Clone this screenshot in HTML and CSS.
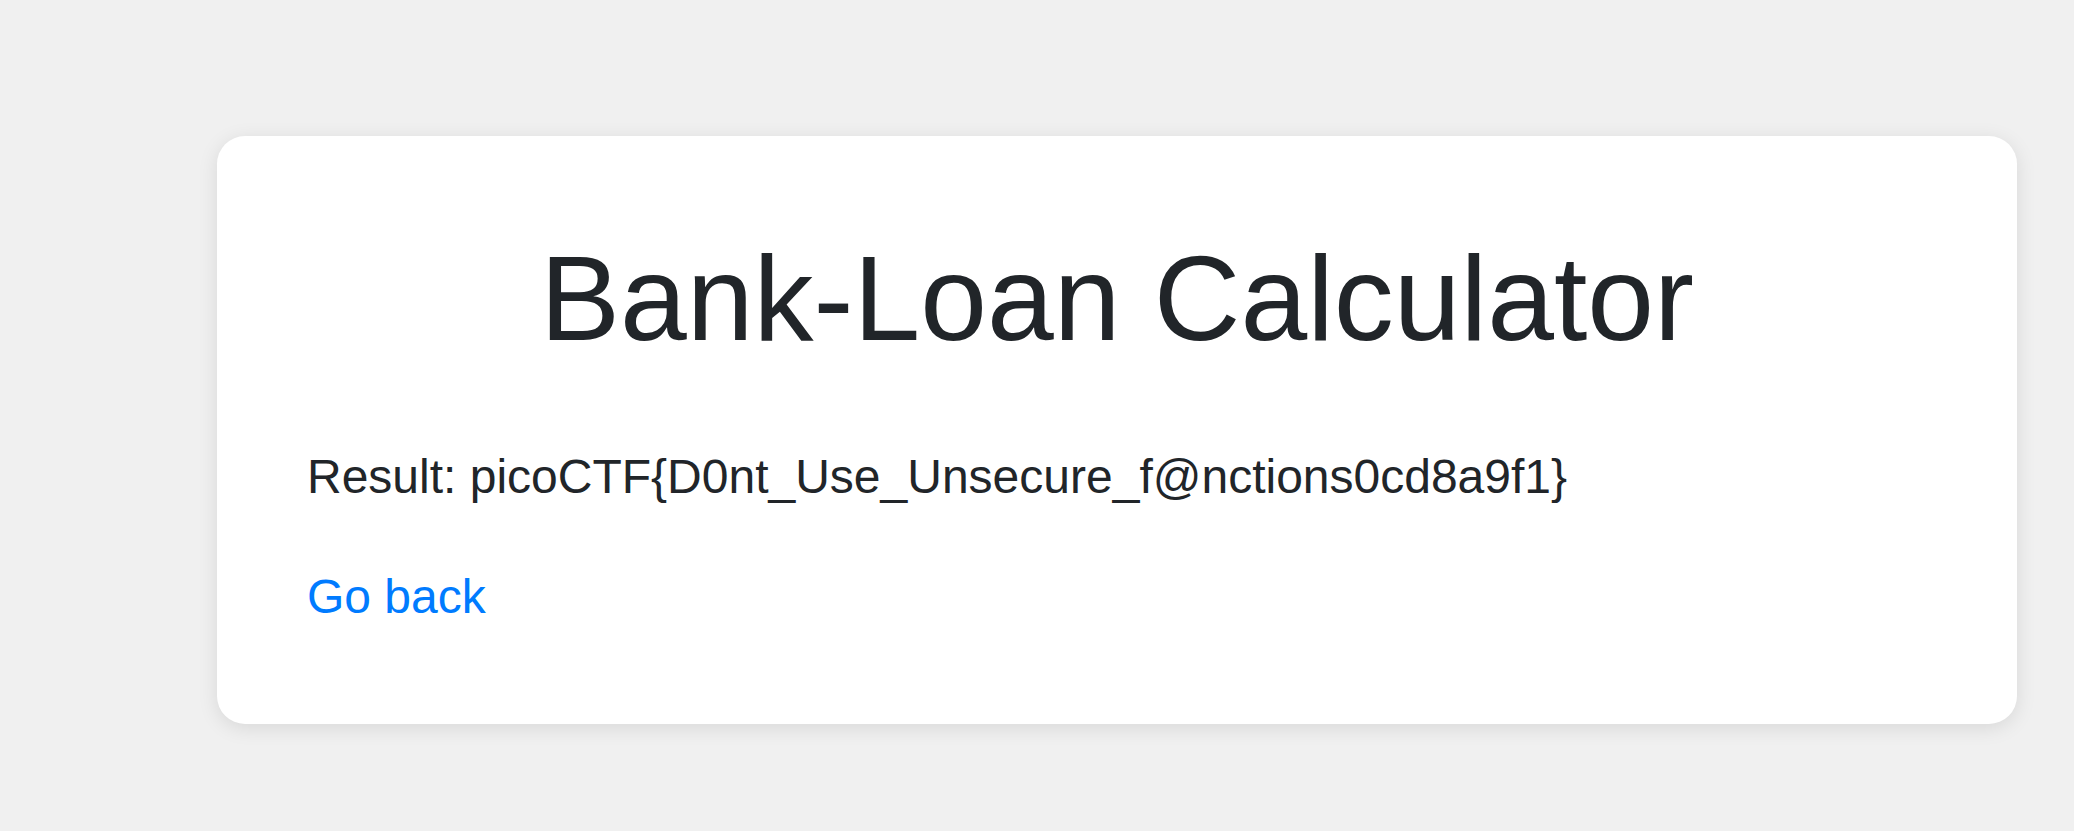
FILE: index.html
```html
<!DOCTYPE html>
<html lang="en">
<head>
<meta charset="utf-8">
<title>Bank-Loan Calculator</title>
<link rel="stylesheet" href="styles.css">
</head>
<body>
<main class="page">
  <section class="card">
    <h1 class="title">Bank-Loan Calculator</h1>
    <p class="result">Result: picoCTF{D0nt_Use_Unsecure_f@nctions0cd8a9f1}</p>
    <p class="back"><a class="back-link" href="#">Go back</a></p>
  </section>
</main>
</body>
</html>
```

FILE: styles.css
```css
html, body {
  margin: 0;
  padding: 0;
}

body {
  background: #f0f0f0;
  font-family: "Liberation Sans", Arial, sans-serif;
  color: #212529;
  min-height: 831px;
}

.page {
  padding: 136px 0 0 217px;
}

.card {
  width: 1800px;
  box-sizing: border-box;
  padding: 90px 90px 91px 90px;
  background: #ffffff;
  border-radius: 28px;
  box-shadow: 0 4px 20px rgba(0, 0, 0, 0.1);
}

.title {
  margin: 0 0 71px 0;
  font-size: 120px;
  font-weight: 400;
  line-height: 1.2;
  text-align: center;
  color: #212529;
}

.result {
  margin: 0 0 48px 0;
  font-size: 48px;
  line-height: 1.5;
}

.back {
  margin: 0;
  font-size: 48px;
  line-height: 1.5;
}

.back-link {
  color: #007bff;
  text-decoration: none;
}
```
